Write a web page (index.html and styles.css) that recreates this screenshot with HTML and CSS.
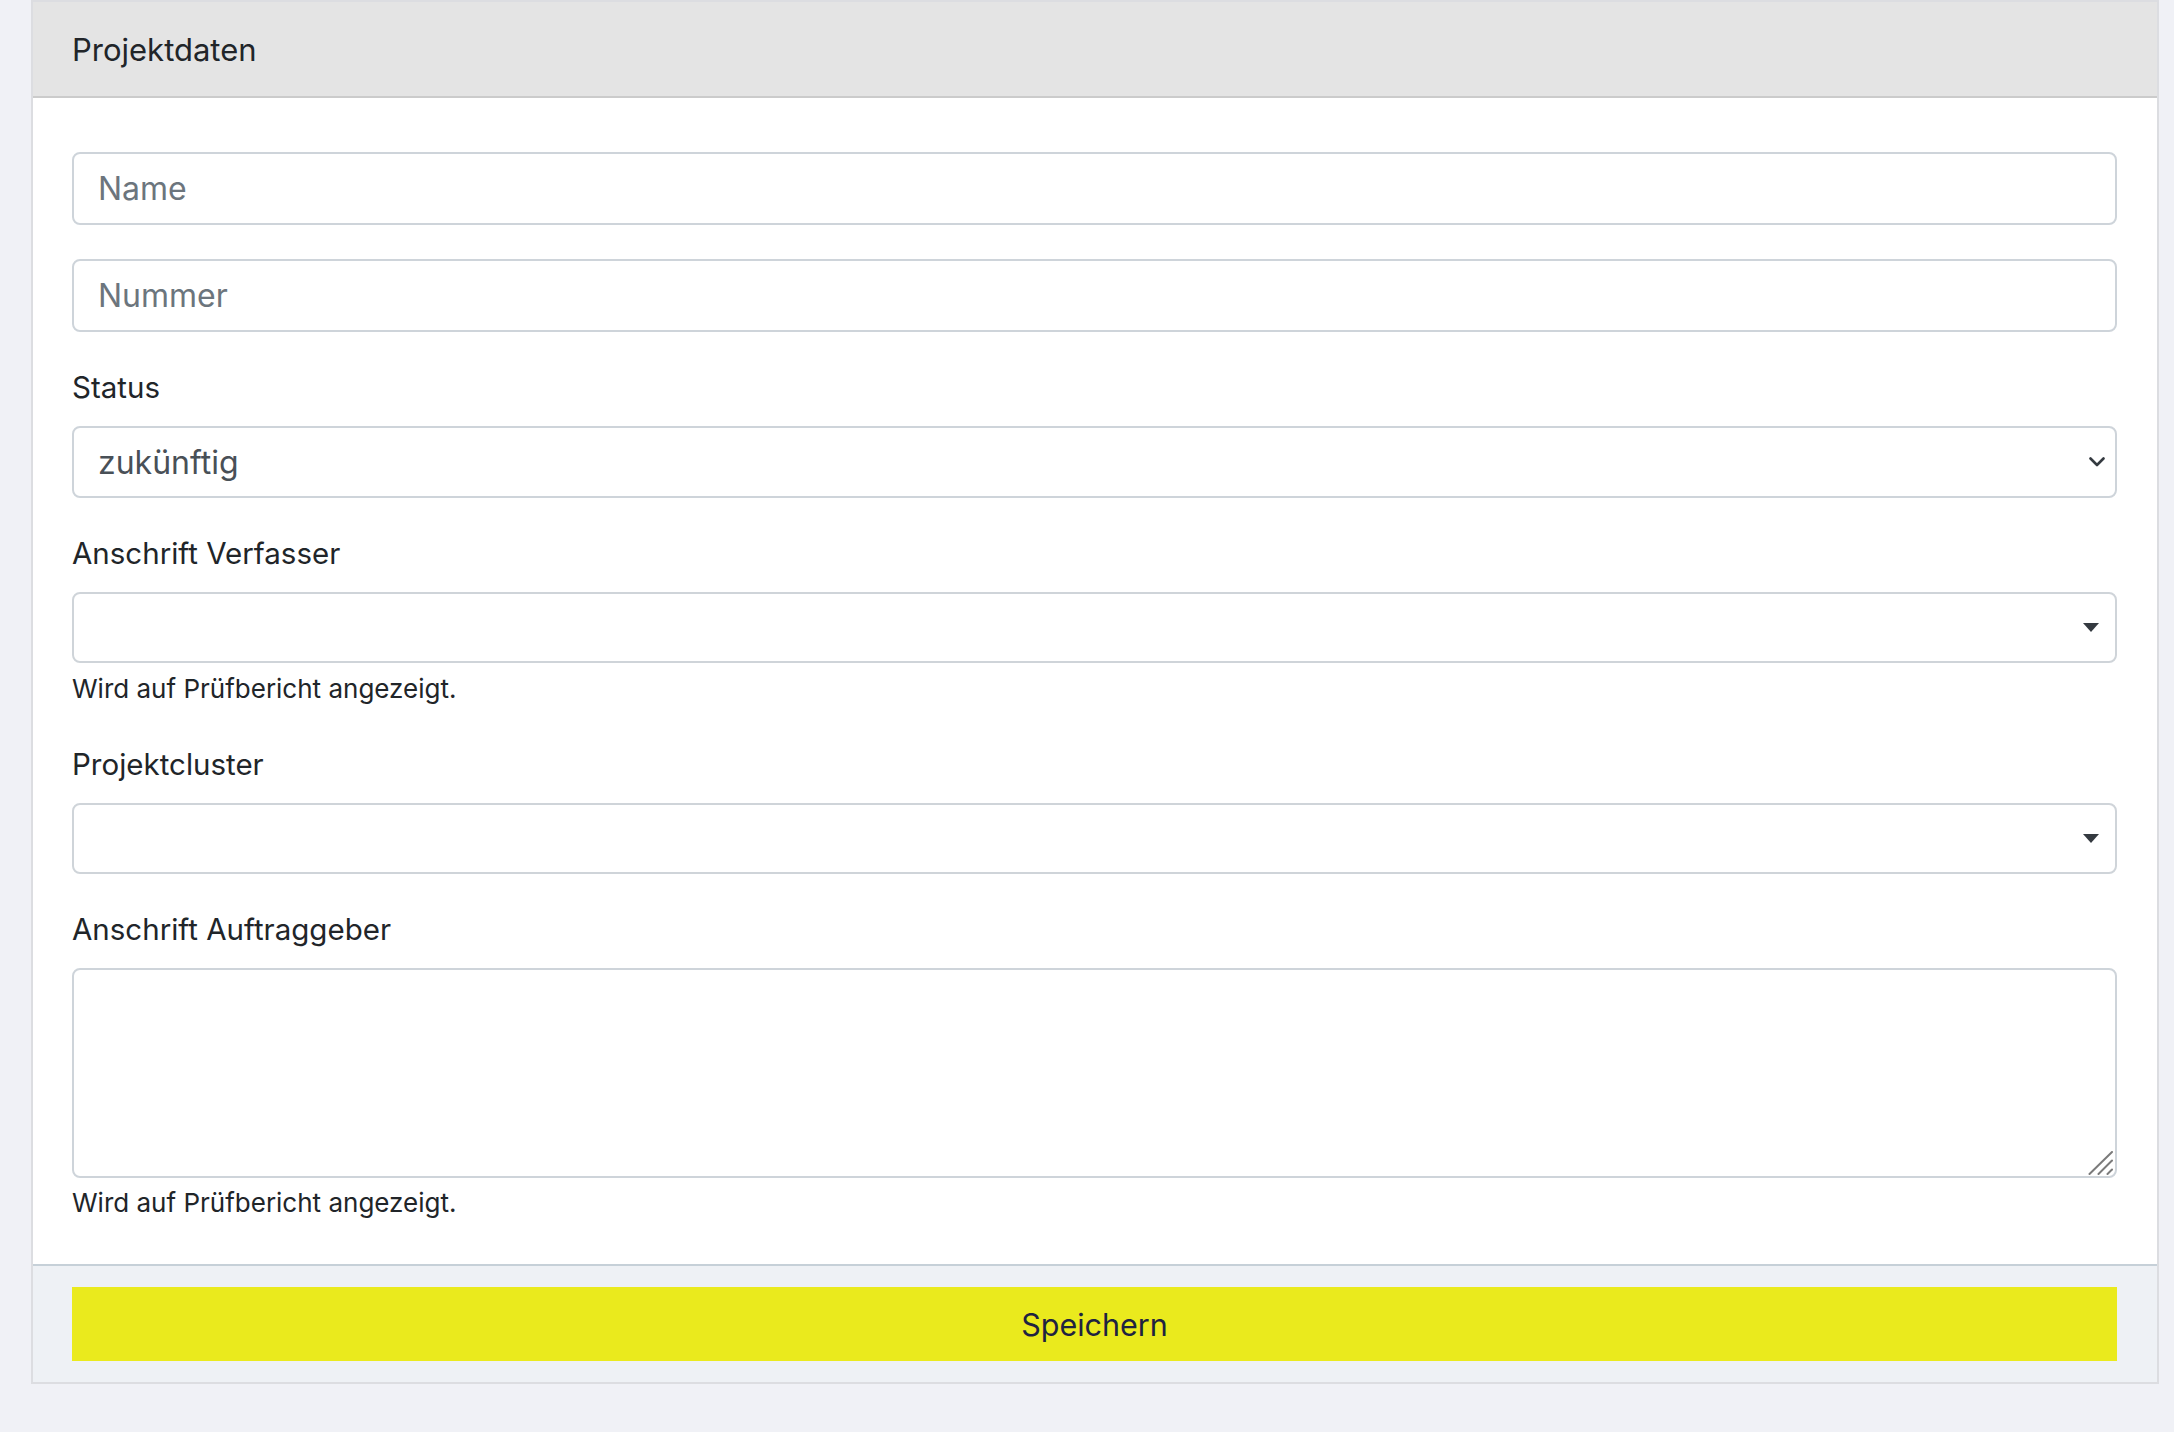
FILE: index.html
```html
<!DOCTYPE html>
<html lang="de">
<head>
<meta charset="utf-8">
<title>Projektdaten</title>
<link rel="stylesheet" href="styles.css">
</head>
<body>
<div class="card">
  <div class="card-header">Projektdaten</div>
  <div class="card-body">
    <input class="field" type="text" placeholder="Name">
    <input class="field field-next" type="text" placeholder="Nummer">

    <div class="group">
      <label class="label">Status</label>
      <div class="field select select-status">
        <span class="select-value">zukünftig</span>
        <svg class="chevron" width="16" height="10" viewBox="0 0 16 10"><polyline points="1.5,1.5 8,8 14.5,1.5" fill="none" stroke="#343a40" stroke-width="2.6" stroke-linecap="round" stroke-linejoin="round"/></svg>
      </div>
    </div>

    <div class="group">
      <label class="label">Anschrift Verfasser</label>
      <div class="field select select2">
        <span class="select-value"></span>
        <span class="caret"></span>
      </div>
      <div class="help">Wird auf Prüfbericht angezeigt.</div>
    </div>

    <div class="group group-after-help">
      <label class="label">Projektcluster</label>
      <div class="field select select2">
        <span class="select-value"></span>
        <span class="caret"></span>
      </div>
    </div>

    <div class="group">
      <label class="label">Anschrift Auftraggeber</label>
      <div class="textarea-wrap">
        <textarea class="field textarea"></textarea>
        <svg class="resize-handle" width="25" height="24" viewBox="0 0 25 24"><g stroke="#7b7b7b" stroke-width="2" stroke-linecap="round"><line x1="1.5" y1="23" x2="24" y2="1"/><line x1="10.5" y1="23" x2="24" y2="9.5"/><line x1="19.5" y1="23" x2="24" y2="18.5"/></g></svg>
      </div>
      <div class="help help-textarea">Wird auf Prüfbericht angezeigt.</div>
    </div>
  </div>
  <div class="card-footer">
    <button class="btn-save" type="button">Speichern</button>
  </div>
</div>
</body>
</html>
```

FILE: styles.css
```css
html, body {
  margin: 0;
  padding: 0;
}

body {
  background: #f0f1f6;
  font-family: Inter, "DejaVu Sans", sans-serif;
  color: #212529;
}

.card {
  box-sizing: border-box;
  width: 2128px;
  margin-left: 31px;
  border: 2px solid #dcdde1;
  background: #ffffff;
}

.card-header {
  box-sizing: border-box;
  height: 96px;
  padding: 0 39px;
  display: flex;
  align-items: center;
  background: #e4e4e4;
  border-bottom: 2px solid #cbcbcb;
  font-size: 31px;
  color: #212529;
}

.card-body {
  padding: 54px 40px 43px 39px;
}

.field {
  box-sizing: border-box;
  display: block;
  width: 100%;
  height: 73px;
  margin: 0;
  padding: 0 24px;
  border: 2px solid #ced4da;
  border-radius: 8px;
  background: #ffffff;
  font-family: Inter, "DejaVu Sans", sans-serif;
  font-size: 32px;
  color: #495057;
  outline: none;
}

.field::placeholder {
  color: #6c757d;
}

.field-next {
  margin-top: 34px;
}

.group {
  margin-top: 34px;
}

.group-after-help {
  margin-top: 36px;
}

.label {
  display: block;
  height: 42px;
  line-height: 42px;
  margin-bottom: 18px;
  font-size: 29.5px;
  color: #212529;
}

.select {
  display: flex;
  align-items: center;
  justify-content: space-between;
}

.select-status {
  height: 72px;
  padding-right: 10px;
}

.select2 {
  height: 71px;
  padding-right: 16px;
  border-color: #cfd4d9;
}

.chevron {
  display: block;
}

.caret {
  width: 0;
  height: 0;
  border-left: 8px solid transparent;
  border-right: 8px solid transparent;
  border-top: 9px solid #343a40;
}

.textarea-wrap {
  position: relative;
}

.textarea {
  height: 210px;
  padding: 12px 24px;
  resize: none;
}

.resize-handle {
  position: absolute;
  right: 4px;
  bottom: 3px;
  pointer-events: none;
}

.help {
  margin-top: 8px;
  height: 36px;
  line-height: 36px;
  font-size: 26px;
  color: #212529;
}

.help-textarea {
  margin-top: 7px;
}

.card-footer {
  padding: 21px 40px 21px 39px;
  background: #eef1f5;
  border-top: 2px solid #c6d0d8;
}

.btn-save {
  display: block;
  width: 100%;
  height: 74px;
  margin: 0;
  border: none;
  border-radius: 0;
  background: #eaea1d;
  font-family: Inter, "DejaVu Sans", sans-serif;
  font-size: 30.5px;
  color: #1f2340;
  cursor: pointer;
}
```
